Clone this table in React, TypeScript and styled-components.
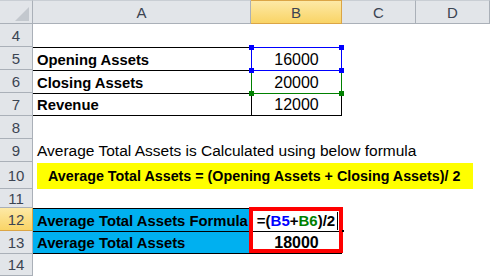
import React from 'react';
import styled, { createGlobalStyle, css } from 'styled-components';

const HEAD_BG = '#e2e5e9';
const HEAD_LINE = '#aab0b8';
const ACTIVE_BG = 'linear-gradient(#fde9a6, #f9d466)';
const ACTIVE_LINE = '#dba546';

const GlobalStyle = createGlobalStyle`
  html, body {
    margin: 0;
    padding: 0;
    background: #fff;
  }
  body {
    font-family: 'Liberation Sans', Arial, sans-serif;
    color: #000;
  }
`;

const Sheet = styled.div`
  display: grid;
  grid-template-columns: 33px 218px 91px 74px 74px;
  grid-template-rows: 24px repeat(6, 23px) 27px 19px 23px 23px 22px;
  width: 490px;
  height: 276px;
  overflow: hidden;
`;

const Corner = styled.div`
  background: ${HEAD_BG};
  border-top: 1px solid #c9ced4;
  border-right: 1px solid ${HEAD_LINE};
  border-bottom: 1px solid ${HEAD_LINE};
  display: flex;
  align-items: flex-end;
  justify-content: flex-end;
  padding: 0 3px 2px 0;
  box-sizing: border-box;
`;

const headText = css`
  font-size: 15px;
  color: #3b4452;
  display: flex;
  align-items: center;
  justify-content: center;
  box-sizing: border-box;
`;

const ColHead = styled.div<{ $active?: boolean }>`
  ${headText};
  background: ${(p) => (p.$active ? ACTIVE_BG : HEAD_BG)};
  border-top: 1px solid ${(p) => (p.$active ? ACTIVE_LINE : '#c9ced4')};
  border-right: 1px solid ${(p) => (p.$active ? ACTIVE_LINE : HEAD_LINE)};
  border-bottom: 1px solid ${(p) => (p.$active ? ACTIVE_LINE : HEAD_LINE)};
  padding-top: 1px;
`;

const RowHead = styled.div<{ $active?: boolean }>`
  ${headText};
  background: ${(p) => (p.$active ? ACTIVE_BG : HEAD_BG)};
  border-right: 1px solid ${(p) => (p.$active ? ACTIVE_LINE : HEAD_LINE)};
  border-bottom: 1px solid ${(p) => (p.$active ? ACTIVE_LINE : HEAD_LINE)};
`;

type CellProps = {
  $t?: boolean;
  $b?: boolean;
  $l?: boolean;
  $r?: boolean;
  $bold?: boolean;
  $num?: boolean;
  $fill?: string;
  $span?: number;
};

const Cell = styled.div<CellProps>`
  position: relative;
  box-sizing: border-box;
  display: flex;
  align-items: center;
  justify-content: ${(p) => (p.$num ? 'center' : 'flex-start')};
  padding: 1px 0 0 ${(p) => (p.$num ? 0 : 4)}px;
  white-space: nowrap;
  font-size: ${(p) => (p.$num ? 16 : p.$bold ? 14.8 : 15.5)}px;
  font-weight: ${(p) => (p.$bold ? 700 : 400)};
  background: ${(p) => p.$fill || 'transparent'};
  grid-column: ${(p) => (p.$span ? `span ${p.$span}` : 'auto')};
  border-top: ${(p) => (p.$t ? '1px solid #000' : 'none')};
  border-bottom: ${(p) => (p.$b ? '1px solid #000' : 'none')};
  border-left: ${(p) => (p.$l ? '1px solid #000' : 'none')};
  border-right: ${(p) => (p.$r ? '1px solid #000' : 'none')};
`;

const Highlight = styled.span`
  display: flex;
  align-items: center;
  height: 26px;
  width: 436px;
  margin-top: -1px;
  padding-left: 11px;
  box-sizing: border-box;
  background: #ffff00;
  font-size: 14.3px;
  font-weight: 700;
`;

const Formula = styled.span`
  display: inline-flex;
  align-items: center;
  margin-left: 2px;
  font-size: 15px;
  font-weight: 700;
`;

const RefBox = styled.span<{ $color: string; $z: number }>`
  position: absolute;
  top: -1px;
  left: -1px;
  right: -1px;
  bottom: -1px;
  border: 1px solid ${(p) => p.$color};
  z-index: ${(p) => p.$z};
  pointer-events: none;
`;

const Handle = styled.span<{ $color: string; $x: 'left' | 'right'; $y: 'top' | 'bottom' }>`
  position: absolute;
  width: 5px;
  height: 5px;
  background: ${(p) => p.$color};
  ${(p) => p.$x}: -3px;
  ${(p) => p.$y}: -3px;
`;

const RedBox = styled.span`
  position: absolute;
  top: -2px;
  left: -3px;
  right: -2px;
  bottom: -22px;
  border: 4px solid #ff0000;
  z-index: 3;
  pointer-events: none;
`;

const Ref = styled.span<{ $color: string }>`
  color: ${(p) => p.$color};
`;

const Caret = styled.span`
  display: inline-block;
  width: 1px;
  height: 18px;
  margin-left: 2px;
  background: #000;
`;

const FillMark = styled.span`
  position: absolute;
  right: -3px;
  bottom: -1px;
  width: 2px;
  height: 2px;
  background: #000;
  z-index: 4;
`;

const CornerMark = () => (
  <svg width="14" height="14" viewBox="0 0 14 14">
    <polygon points="14,0 14,14 0,14" fill="#c3c8ce" />
  </svg>
);

const RefCorners = ({ color, z }: { color: string; z: number }) => (
  <RefBox $color={color} $z={z}>
    <Handle $color={color} $x="left" $y="top" />
    <Handle $color={color} $x="right" $y="top" />
    <Handle $color={color} $x="left" $y="bottom" />
    <Handle $color={color} $x="right" $y="bottom" />
  </RefBox>
);

const Empty = () => (
  <>
    <Cell />
    <Cell />
    <Cell />
    <Cell />
  </>
);

const App = () => (
  <>
    <GlobalStyle />
    <Sheet>
      <Corner>
        <CornerMark />
      </Corner>
      <ColHead>A</ColHead>
      <ColHead $active>B</ColHead>
      <ColHead>C</ColHead>
      <ColHead>D</ColHead>

      <RowHead>4</RowHead>
      <Empty />

      <RowHead>5</RowHead>
      <Cell $t $bold>Opening Assets</Cell>
      <Cell $t $l $r $num>
        16000
        <RefCorners color="#0000ff" z={2} />
      </Cell>
      <Cell />
      <Cell />

      <RowHead>6</RowHead>
      <Cell $t $bold>Closing Assets</Cell>
      <Cell $t $l $r $num>
        20000
        <RefCorners color="#008000" z={1} />
      </Cell>
      <Cell />
      <Cell />

      <RowHead>7</RowHead>
      <Cell $t $b $bold>Revenue</Cell>
      <Cell $t $b $l $r $num>12000</Cell>
      <Cell />
      <Cell />

      <RowHead>8</RowHead>
      <Empty />

      <RowHead>9</RowHead>
      <Cell $span={4}>Average Total Assets is Calculated using below formula</Cell>

      <RowHead>10</RowHead>
      <Cell $span={4}>
        <Highlight>Average Total Assets = (Opening Assets + Closing Assets)/ 2</Highlight>
      </Cell>

      <RowHead>11</RowHead>
      <Empty />

      <RowHead $active>12</RowHead>
      <Cell $t $bold $fill="#00b0f0">Average Total Assets Formula</Cell>
      <Cell $t $l $r $num>
        <Formula>
          =(<Ref $color="#0000ff">B5</Ref>+<Ref $color="#008000">B6</Ref>)/2
          <Caret />
        </Formula>
        <RedBox />
        <FillMark />
      </Cell>
      <Cell />
      <Cell />

      <RowHead>13</RowHead>
      <Cell $t $b $bold $fill="#00b0f0">Average Total Assets</Cell>
      <Cell $t $b $l $r $num $bold>18000</Cell>
      <Cell />
      <Cell />

      <RowHead>14</RowHead>
      <Empty />
    </Sheet>
  </>
);

export default App;
